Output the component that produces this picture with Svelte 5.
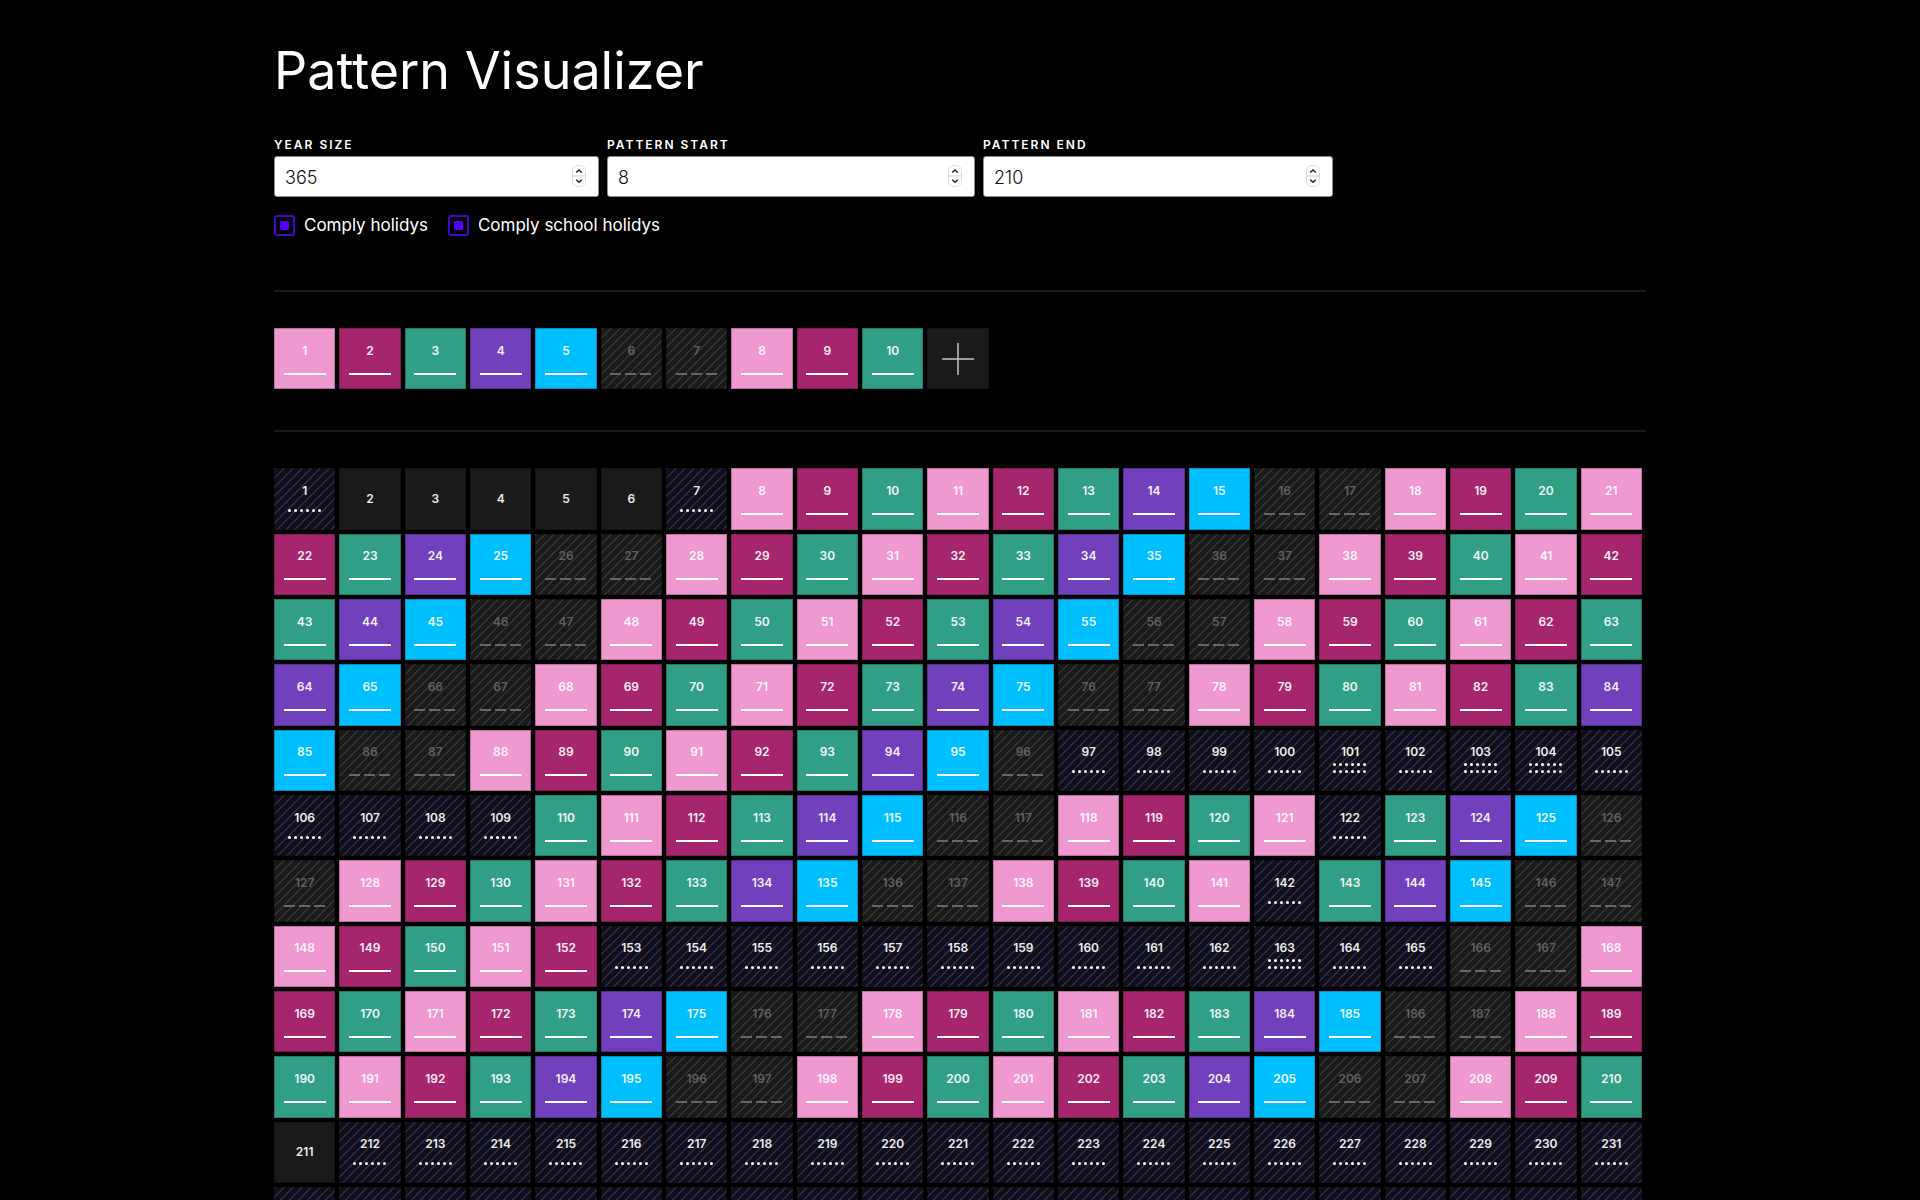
<script>
  let yearSize = $state(365);
  let patternStart = $state(8);
  let patternEnd = $state(210);
  let complyHolidays = $state(true);
  let complySchool = $state(true);

  let pattern = $state(['pink', 'plum', 'green', 'violet', 'sky', 'off', 'off', 'pink', 'plum', 'green']);

  const publicHolidays = [1, 7, 101, 103, 104, 122, 142, 163];
  const schoolHolidays = [[97, 109], [153, 165], [212, 274]];

  const isSchool = (day) => schoolHolidays.some(([from, to]) => day >= from && day <= to);

  let days = $derived(
    Array.from({ length: yearSize || 0 }, (_, i) => {
      const day = i + 1;
      const rows =
        (complyHolidays && publicHolidays.includes(day) ? 1 : 0) + (complySchool && isSchool(day) ? 1 : 0);
      let kind = 'plain';
      if (rows) kind = 'holiday';
      else if (day >= patternStart && day <= patternEnd) kind = pattern[i % pattern.length];
      return { day, kind, rows };
    })
  );

  const addDay = () => pattern.push('off');
  const toggle = (i) => (pattern[i] = pattern[i] === 'off' ? 'pink' : 'off');
</script>

{#snippet mark(kind, rows)}
  {#if kind === 'holiday'}
    <span class="dots">
      {#each { length: rows } as _}
        <span class="dot-row">{#each { length: 6 } as _}<i></i>{/each}</span>
      {/each}
    </span>
  {:else if kind !== 'plain'}
    <span class="line"></span>
  {/if}
{/snippet}

{#snippet stepper()}
  <svg class="stepper" viewBox="0 0 14 22" aria-hidden="true">
    <rect x="0.5" y="0.5" width="13" height="21" rx="5" fill="#fff" stroke="#dcdcdc" />
    <path d="M0 11H14" stroke="#cfcfcf" />
    <path d="M4.2 7.5 7 4.9 9.8 7.5M4.2 14.7 7 17.3 9.8 14.7" fill="none" stroke="#222" stroke-width="1.5" />
  </svg>
{/snippet}

<main>
  <h1>Pattern Visualizer</h1>

  <form>
    <div class="fields">
      <label class="field">
        <span>Year size</span>
        <span class="box"><input type="number" bind:value={yearSize} />{@render stepper()}</span>
      </label>
      <label class="field">
        <span>Pattern start</span>
        <span class="box"><input type="number" bind:value={patternStart} />{@render stepper()}</span>
      </label>
      <label class="field">
        <span>Pattern end</span>
        <span class="box"><input type="number" bind:value={patternEnd} />{@render stepper()}</span>
      </label>
    </div>
    <div class="checks">
      <label class="check"><input type="checkbox" bind:checked={complyHolidays} />Comply holidys</label>
      <label class="check"><input type="checkbox" bind:checked={complySchool} />Comply school holidys</label>
    </div>
  </form>

  <section class="tiles">
    {#each pattern as kind, i}
      <button class="tile {kind}" onclick={() => toggle(i)}>
        <span class="num">{i + 1}</span>
        {@render mark(kind, 0)}
      </button>
    {/each}
    <button class="tile plain" aria-label="Add day" onclick={addDay}>
      <svg class="plus" viewBox="0 0 32 32"><path d="M16 0V32M0 16H32" stroke="#c4c4c4" stroke-width="1.5" /></svg>
    </button>
  </section>

  <section class="tiles">
    {#each days as { day, kind, rows }}
      <div class="tile {kind}">
        <span class="num">{day}</span>
        {@render mark(kind, rows)}
      </div>
    {/each}
  </section>
</main>

<style>
  :global(html) {
    scrollbar-width: none;
  }
  :global(body) {
    background: #000;
  }
  main {
    box-sizing: border-box;
    max-width: 1372px;
    margin: 0 auto;
    padding: 37px 0;
    color: #fff;
    font-family: Inter, 'Liberation Sans', sans-serif;
  }
  h1 {
    margin: 0 0 32px;
    font-size: 52px;
    line-height: 68px;
    font-weight: 400;
  }
  .fields {
    display: grid;
    grid-template-columns: 325fr 368fr 350fr;
    gap: 8px;
    max-width: 1059px;
  }
  .field {
    display: flex;
    flex-direction: column;
    gap: 3px;
    font-size: 12px;
    line-height: 16px;
    font-weight: 600;
    letter-spacing: 2px;
    text-transform: uppercase;
  }
  .box {
    position: relative;
    display: block;
  }
  .field input {
    box-sizing: border-box;
    width: 100%;
    height: 41px;
    padding: 1px 40px 0 10px;
    border: 1px solid #8c8c8c;
    border-radius: 3px;
    background: #fff;
    color: #111;
    font: 300 18px Inter, 'Liberation Sans', sans-serif;
    appearance: textfield;
    display: block;
  }
  .stepper {
    position: absolute;
    right: 13px;
    top: 9px;
    width: 14px;
    height: 22px;
  }
  .checks {
    display: flex;
    gap: 20px;
    margin-top: 15px;
  }
  .check {
    display: flex;
    align-items: center;
    gap: 9px;
    font-size: 17px;
    line-height: 26px;
  }
  .check input {
    appearance: none;
    box-sizing: border-box;
    width: 21px;
    height: 21px;
    margin: 0;
    border: 2px solid #4006c8;
    border-radius: 3px;
    display: grid;
    place-items: center;
  }
  .check input:checked::before {
    content: '';
    width: 9px;
    height: 9px;
    border-radius: 2px;
    background: #5500ff;
  }
  .tiles {
    display: grid;
    grid-template-columns: repeat(21, 1fr);
    gap: 4px;
    padding: 36px 4px 0 0;
    margin-top: 41px;
    border-top: 2px solid #1a1a1a;
  }
  form + .tiles {
    margin-top: 52px;
  }
  .tile {
    box-sizing: border-box;
    aspect-ratio: 1;
    min-width: 0;
    padding: 0;
    border: 1px solid rgba(0, 0, 0, 0.25);
    border-radius: 0;
    display: flex;
    flex-direction: column;
    align-items: center;
    justify-content: center;
    color: #fff;
    font: 600 12px/16px Inter, 'Liberation Sans', sans-serif;
  }
  .num {
    opacity: 0.92;
  }
  .line {
    width: 42px;
    height: 2px;
    margin-top: 14px;
    background: #fff;
  }
  .plain {
    background: #1a1a1a;
  }
  .pink {
    background: #f098d0;
  }
  .plum {
    background: #a6266e;
  }
  .green {
    background: #309f86;
  }
  .violet {
    background: #7040bd;
  }
  .sky {
    background: #00bfff;
  }
  .off,
  .holiday {
    --base: #1a1a1a;
    --stripe: #333;
    background: linear-gradient(
        135deg,
        var(--base) 0 39%,
        var(--stripe) 39% 50%,
        var(--base) 50% 89%,
        var(--stripe) 89% 100%
      )
      0 0 / 9px 9px;
  }
  .off {
    color: #666;
  }
  .off .line {
    background: repeating-linear-gradient(90deg, #666 0 11px, transparent 11px 15px);
  }
  .holiday {
    --base: #110f1f;
    --stripe: #2e2d3a;
  }
  .dots {
    box-sizing: border-box;
    height: 16px;
    padding-bottom: 3px;
    display: flex;
    flex-direction: column;
    justify-content: flex-end;
    gap: 4px;
  }
  .dot-row {
    display: flex;
    gap: 3px;
  }
  .dot-row i {
    width: 3px;
    height: 3px;
    border-radius: 50%;
    background: #fff;
  }
  .plus {
    width: 32px;
    height: 32px;
  }
</style>
